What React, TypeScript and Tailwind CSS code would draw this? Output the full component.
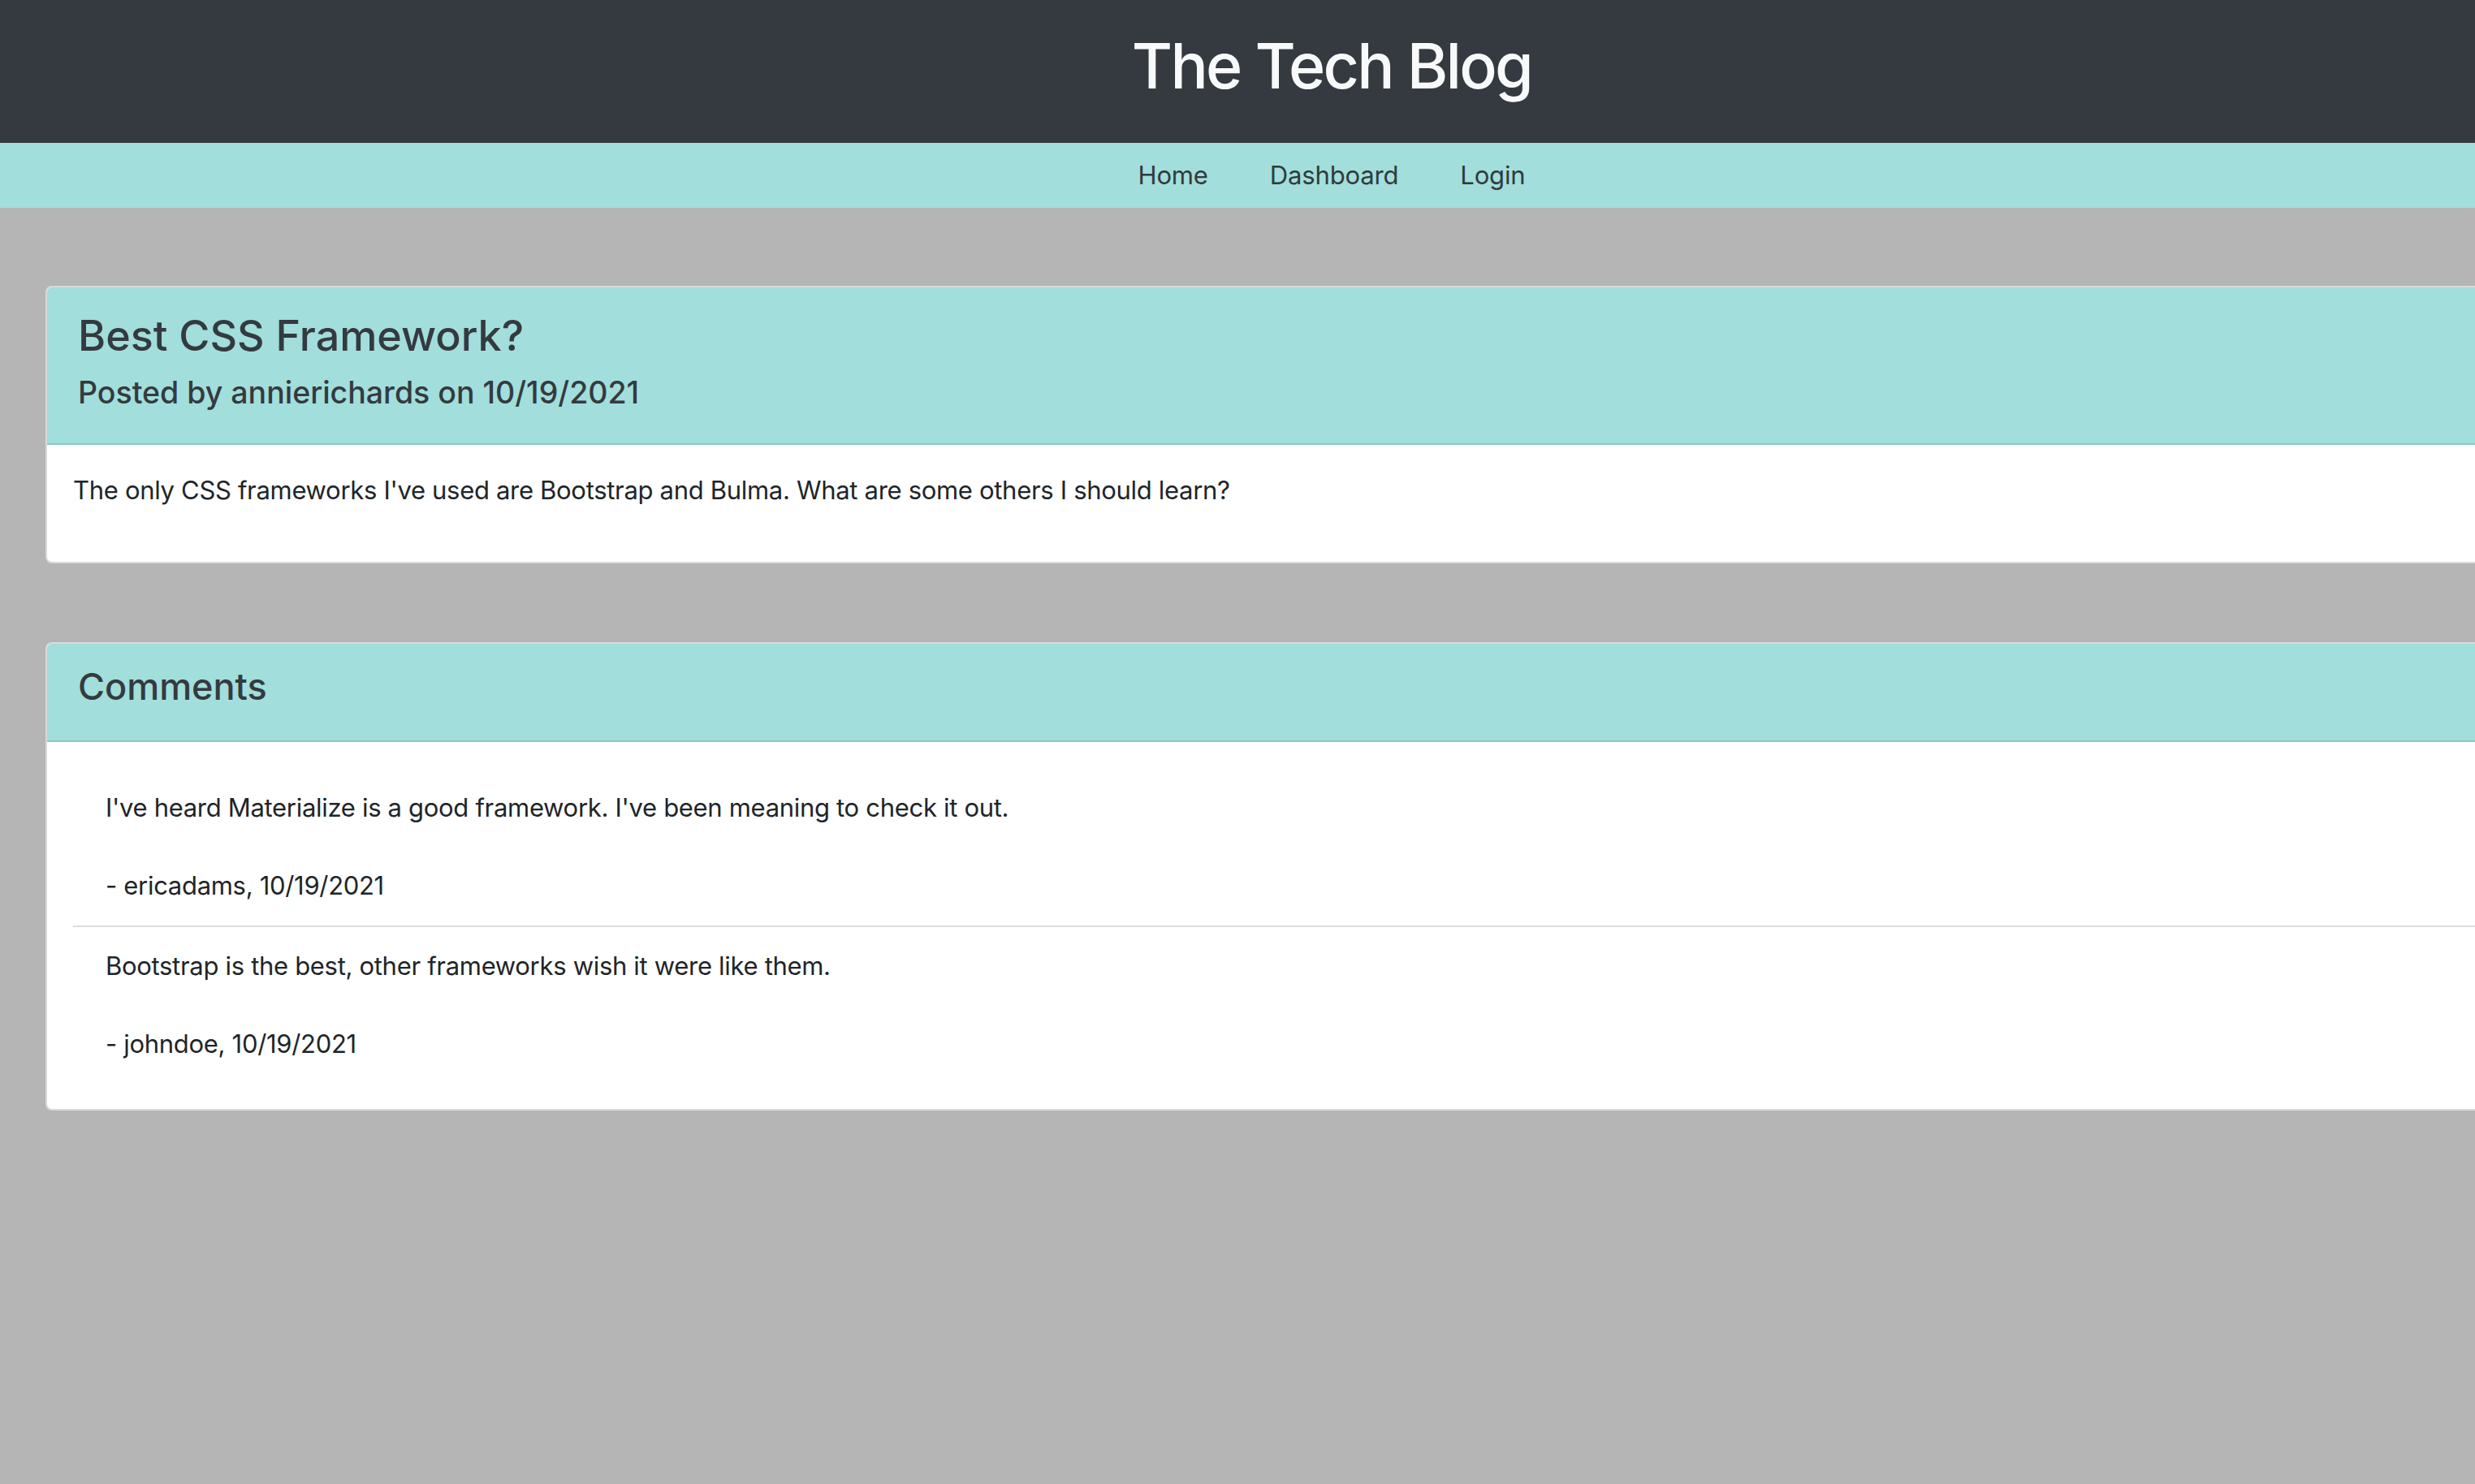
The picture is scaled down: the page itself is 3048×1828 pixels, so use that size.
const comments = [
  {
    text: "I've heard Materialize is a good framework. I've been meaning to check it out.",
    author: "ericadams",
    date: "10/19/2021",
  },
  {
    text: "Bootstrap is the best, other frameworks wish it were like them.",
    author: "johndoe",
    date: "10/19/2021",
  },
];

function App() {
  return (
    <div className="h-[1828px] w-[3048px] overflow-hidden bg-[#b5b5b5] font-['Inter',sans-serif] text-[#212529]">
      <div className="w-[3280px]">
        <header className="h-[176px] bg-[#343a40] pt-[33px] text-center">
          <h1 className="text-[77px] font-medium leading-[96px] tracking-[-0.035em] text-[#f8f9fa]">
            The Tech Blog
          </h1>
        </header>
        <nav className="flex h-[80px] items-center justify-center gap-[76px] bg-[#a2dedb] text-[31px] tracking-[-0.005em] text-[#2f3b3e]">
          <a href="#">Home</a>
          <a href="#">Dashboard</a>
          <a href="#">Login</a>
        </nav>

        <main className="px-[56px] pt-[96px]">
          <section className="overflow-hidden rounded-lg border-2 border-[#d9d9d9] bg-white">
            <div className="border-b-2 border-[#8fc6c3] bg-[#a2dedb] pb-[38px] pl-[38px] pr-[32px] pt-[30px] text-[#343a40]">
              <h2 className="mb-[16px] text-[52px] font-medium leading-[60px]">Best CSS Framework?</h2>
              <h3 className="text-[37.5px] font-medium leading-[48px]">
                Posted by annierichards on 10/19/2021
              </h3>
            </div>
            <div className="px-[32px] pb-[64px] pt-[32px]">
              <p className="text-[31px] leading-[48px] tracking-[-0.01em]">
                The only CSS frameworks I've used are Bootstrap and Bulma. What are some others I should learn?
              </p>
            </div>
          </section>

          <section className="mt-[97px] overflow-hidden rounded-lg border-2 border-[#d9d9d9] bg-white">
            <div className="border-b-2 border-[#8fc6c3] bg-[#a2dedb] pb-[39px] pl-[38px] pr-[32px] pt-[26px] text-[#343a40]">
              <h2 className="text-[45px] font-medium leading-[54px]">Comments</h2>
            </div>
            <div className="p-[32px]">
              <ul>
                {comments.map((c, i) => (
                  <li
                    key={c.author}
                    className={
                      i < comments.length - 1
                        ? "border-b-2 border-[#dedede] pb-[25px] pl-[40px] pt-[25px] text-[31px] leading-[48px] tracking-[-0.01em]"
                        : "pb-[24px] pl-[40px] pt-[24px] text-[31px] leading-[48px] tracking-[-0.01em]"
                    }
                  >
                    <p className="mb-[48px]">{c.text}</p>
                    <p>
                      - {c.author}, {c.date}
                    </p>
                  </li>
                ))}
              </ul>
            </div>
          </section>
        </main>
      </div>
    </div>
  );
}

export default App;
